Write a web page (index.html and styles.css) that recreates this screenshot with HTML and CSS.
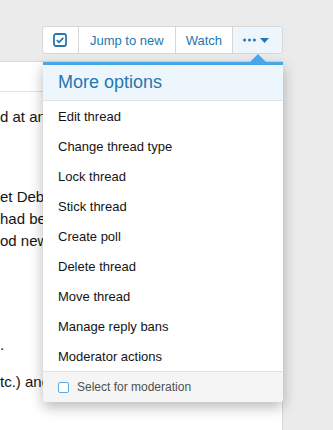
FILE: index.html
```html
<!DOCTYPE html>
<html>
<head>
<meta charset="utf-8">
<link rel="stylesheet" href="styles.css">
</head>
<body>
<div class="page">
  <div class="toolbar">
    <div class="btn-group">
      <span class="btn btn-icon">
        <svg width="14" height="14" viewBox="0 0 14 14"><rect x="1" y="1" width="12" height="12" rx="2" fill="none" stroke="#2577b1" stroke-width="1.8"/><path d="M3.8 7.2 L6 9.3 L10.3 4.8" fill="none" stroke="#2577b1" stroke-width="1.8"/></svg>
      </span>
      <span class="btn btn-jump">Jump to new</span>
      <span class="btn">Watch</span>
      <span class="btn btn-more">
        <svg width="13" height="4" viewBox="0 0 13 4"><circle cx="1.6" cy="2" r="1.5" fill="#2577b1"/><circle cx="6.5" cy="2" r="1.5" fill="#2577b1"/><circle cx="11.4" cy="2" r="1.5" fill="#2577b1"/></svg>
        <svg width="9" height="5" viewBox="0 0 9 5"><path d="M0 0 H9 L4.5 5 Z" fill="#2577b1"/></svg>
      </span>
    </div>
  </div>
  <div class="panel">
    <div class="panel-head"></div>
    <div class="panel-body">
      <p class="line first">d at any time</p>
      <p class="para">et Debate</p>
      <p class="line">had been</p>
      <p class="line">od news</p>
      <p class="line dot">.</p>
      <p class="line last">tc.) and</p>
    </div>
  </div>
  <div class="menu">
    <span class="arrow"></span>
    <div class="menu-head">More options</div>
    <ul class="menu-list">
      <li>Edit thread</li>
      <li>Change thread type</li>
      <li>Lock thread</li>
      <li>Stick thread</li>
      <li>Create poll</li>
      <li>Delete thread</li>
      <li>Move thread</li>
      <li>Manage reply bans</li>
      <li>Moderator actions</li>
    </ul>
    <div class="menu-foot"><span class="cb"></span>Select for moderation</div>
  </div>
</div>
</body>
</html>
```
FILE: styles.css
```css
html, body {
  margin: 0;
  padding: 0;
  background: #ebebeb;
  font-family: "Liberation Sans", Arial, sans-serif;
  height: 100%;
  overflow: hidden;
}
.page {
  position: relative;
  width: 283px;
  padding-top: 26px;
  height: 404px;
}
.toolbar {
  display: flex;
  justify-content: flex-end;
  margin-bottom: 7px;
}
.btn-group {
  display: flex;
  border: 1px solid #d6d6d6;
  border-radius: 3px;
  background: #fff;
  height: 26px;
  overflow: hidden;
}
.btn {
  display: flex;
  align-items: center;
  padding: 0 10px;
  font-size: 13px;
  color: #2577b1;
  border-left: 1px solid #d6d6d6;
}
.btn-icon {
  border-left: none;
  padding: 0 11px 0 10px;
}
.btn-jump {
  padding: 0 11px;
}
.btn-more {
  background: #edf5fd;
  padding: 0 13px 0 10px;
  gap: 4px;
}
.panel {
  background: #fff;
  border-top: 1px solid #d8d8d8;
  border-right: 1px solid #d8d8d8;
  height: 368px;
}
.panel-head {
  height: 29px;
  border-bottom: 1px solid #e2e2e2;
}
.panel-body {
  font-size: 15px;
  color: #141414;
  line-height: 22px;
  width: 44px;
  overflow: hidden;
}
.panel-body p {
  margin: 0;
  white-space: nowrap;
}
.first {
  margin-top: 14px !important;
}
.para {
  margin-top: 58px !important;
}
.dot {
  margin-top: 82px !important;
}
.last {
  margin-top: 15px !important;
}
.menu {
  position: absolute;
  left: 43px;
  top: 62px;
  width: 240px;
  background: #fff;
  border-top: 3px solid #47a7eb;
  border-radius: 0 0 3px 3px;
  box-shadow: 0 5px 14px rgba(0, 0, 0, 0.28);
}
.arrow {
  position: absolute;
  left: 207px;
  top: -11px;
  width: 0;
  height: 0;
  border-left: 8px solid transparent;
  border-right: 8px solid transparent;
  border-bottom: 8px solid #47a7eb;
}
.menu-head {
  height: 35px;
  background: #edf5fd;
  border-bottom: 1px solid #dbe3ea;
  color: #2577b1;
  font-size: 18px;
  display: flex;
  align-items: center;
  padding-left: 15px;
}
.menu-list {
  list-style: none;
  margin: 0;
  padding: 0;
}
.menu-list li {
  height: 30px;
  display: flex;
  align-items: center;
  padding-left: 15px;
  font-size: 13px;
  color: #141414;
}
.menu-foot {
  height: 30px;
  border-top: 1px solid #e2e2e2;
  background: #f5f5f5;
  display: flex;
  align-items: center;
  padding-left: 15px;
  font-size: 12px;
  color: #505050;
  border-radius: 0 0 3px 3px;
}
.cb {
  width: 9px;
  height: 9px;
  border: 1px solid #5ba9e6;
  border-radius: 2px;
  background: #fff;
  margin-right: 8px;
}
```
